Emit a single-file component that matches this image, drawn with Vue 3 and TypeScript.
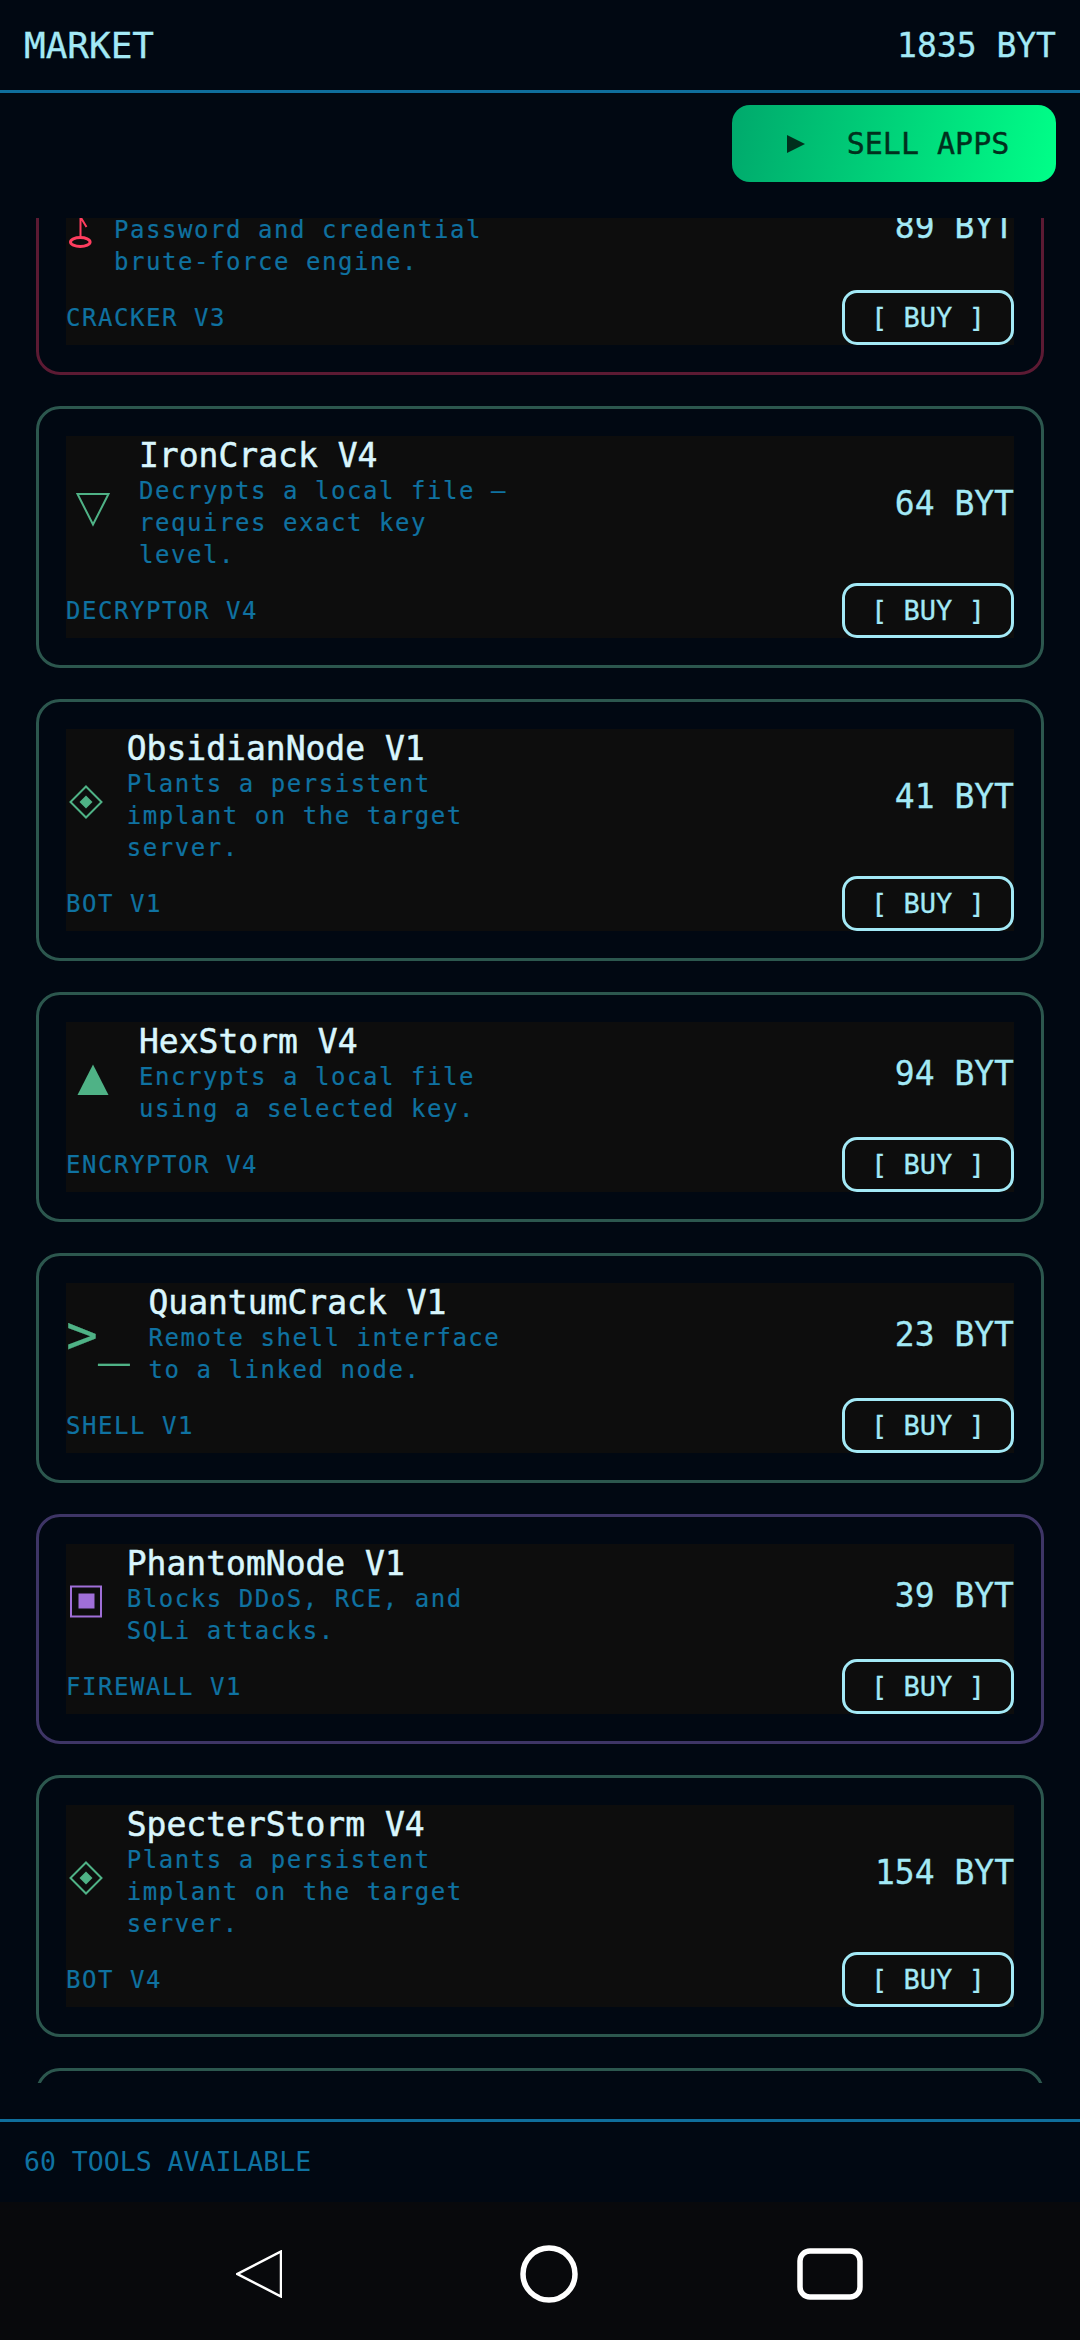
<template>
  <div class="screen">
    <header class="top">
      <span class="top-title">MARKET</span>
      <span class="top-bal">1835 BYT</span>
    </header>

    <div class="sell-row">
      <button class="sell">
        <svg width="18" height="18" viewBox="0 0 18 18"><polygon points="0,0 18,9 0,18" fill="#00301d" /></svg>
        <span>SELL APPS</span>
      </button>
    </div>

    <div class="list">
      <div class="list-inner">
        <article v-for="tool in tools" :key="tool.name" class="card" :class="'tone-' + tool.tone">
          <div class="body">
            <div class="main">
              <span v-if="tool.icon === 'shell'" class="ico ico-shell">&gt;_</span>
              <svg v-else class="ico" :width="iconWidth[tool.icon]" height="60" :viewBox="`0 0 ${iconWidth[tool.icon]} 60`">
                <g v-if="tool.icon === 'key'" fill="none" stroke="#ff3d5e" stroke-width="3">
                  <ellipse cx="14.3" cy="45" rx="9.8" ry="4.5" />
                  <path d="M14.5 40V6M14.5 20l6 10" stroke-width="2" />
                </g>
                <polygon v-else-if="tool.icon === 'down'" points="11.5,20 42.5,20 27,50.5" fill="none" stroke="#4fb286" stroke-width="2" />
                <polygon v-else-if="tool.icon === 'up'" points="27,20.5 42.5,51 11.5,51" fill="#4fb286" />
                <g v-else-if="tool.icon === 'bot'">
                  <polygon points="20,19.5 35.5,35 20,50.5 4.5,35" fill="none" stroke="#4fb286" stroke-width="2" />
                  <polygon points="20,28.5 26.5,35 20,41.5 13.5,35" fill="#4fb286" />
                </g>
                <g v-else>
                  <rect x="5" y="20.5" width="30" height="30" fill="none" stroke="#a06fd8" stroke-width="2" />
                  <rect x="12.5" y="27.5" width="16" height="15" fill="#a06fd8" />
                </g>
              </svg>
              <div class="info">
                <div class="name">{{ tool.name }}</div>
                <p class="desc">
                  <span v-for="line in tool.desc" :key="line">{{ line }}</span>
                </p>
              </div>
              <div class="price">{{ tool.price }} BYT</div>
            </div>
            <div class="foot">
              <span class="kind">{{ tool.kind }}</span>
              <button class="buy">[ BUY ]</button>
            </div>
          </div>
        </article>
      </div>
    </div>

    <footer class="bottom">60 TOOLS AVAILABLE</footer>

    <nav class="nav">
      <svg width="46" height="48" viewBox="0 0 46 48"><polygon points="45,1.5 45,46.5 1.5,24" fill="none" stroke="#fff" stroke-width="2.5" /></svg>
      <svg class="nav-home" width="58" height="58" viewBox="0 0 58 58"><circle cx="29" cy="29" r="26" fill="none" stroke="#fff" stroke-width="5.5" /></svg>
      <svg class="nav-recent" width="66" height="52" viewBox="0 0 66 52"><rect x="3" y="3" width="60" height="46" rx="10" fill="none" stroke="#fff" stroke-width="5.5" /></svg>
    </nav>
  </div>
</template>

<script setup lang="ts">
// 市场页面，列出可购买的工具。

type IconName = 'key' | 'down' | 'up' | 'bot' | 'shell' | 'wall'

interface Tool {
  name: string
  desc: string[]
  kind: string
  price: number
  icon: IconName
  tone: 'red' | 'green' | 'purple'
}

const iconWidth: Record<IconName, number> = { key: 30, down: 55, up: 55, bot: 42.7, shell: 64.4, wall: 42.7 }

const plant = ['Plants a persistent', 'implant on the target', 'server.']

const tools: Tool[] = [
  { name: 'NullCrack V3', desc: ['Password and credential', 'brute-force engine.'], kind: 'CRACKER V3', price: 89, icon: 'key', tone: 'red' },
  { name: 'IronCrack V4', desc: ['Decrypts a local file —', 'requires exact key', 'level.'], kind: 'DECRYPTOR V4', price: 64, icon: 'down', tone: 'green' },
  { name: 'ObsidianNode V1', desc: plant, kind: 'BOT V1', price: 41, icon: 'bot', tone: 'green' },
  { name: 'HexStorm V4', desc: ['Encrypts a local file', 'using a selected key.'], kind: 'ENCRYPTOR V4', price: 94, icon: 'up', tone: 'green' },
  { name: 'QuantumCrack V1', desc: ['Remote shell interface', 'to a linked node.'], kind: 'SHELL V1', price: 23, icon: 'shell', tone: 'green' },
  { name: 'PhantomNode V1', desc: ['Blocks DDoS, RCE, and', 'SQLi attacks.'], kind: 'FIREWALL V1', price: 39, icon: 'wall', tone: 'purple' },
  { name: 'SpecterStorm V4', desc: plant, kind: 'BOT V4', price: 154, icon: 'bot', tone: 'green' },
  { name: 'IronStorm V2', desc: ['Encrypts a local file', 'using a selected key.'], kind: 'ENCRYPTOR V2', price: 72, icon: 'up', tone: 'green' },
]
</script>

<style>
html, body { background: #010812; }
</style>

<style scoped>
.screen { width: 1080px; height: 2340px; display: flex; flex-direction: column; background: #010812; font-family: "DejaVu Sans Mono", monospace; overflow: hidden; }

.top { height: 90px; box-sizing: content-box; border-bottom: 3px solid #0f6e9c; display: flex; align-items: center; justify-content: space-between; padding: 0 24px; color: #a3e9f6; -webkit-text-stroke: 0.3px #a3e9f6; }
.top-title { font-size: 36px; }
.top-bal { font-size: 33px; }

.sell-row { display: flex; justify-content: flex-end; padding: 12px 24px 36px; }
.sell { width: 324px; height: 77px; border: 0; border-radius: 18px; background: linear-gradient(100deg, #00a96c, #00ff88); display: flex; align-items: center; justify-content: center; gap: 42px; font: inherit; font-size: 30px; color: #00301d; -webkit-text-stroke: 0.4px #00301d; padding: 0 0 0 8px; }

.list { height: 1865px; overflow: hidden; flex: none; }
.list-inner { margin-top: -73px; padding: 0 36px; display: flex; flex-direction: column; gap: 31px; }

.card { border: 3px solid #2c574e; border-radius: 24px; padding: 27px; }
.tone-red { border-color: #5c1a33; }
.tone-purple { border-color: #3e3566; }

.body { background: #0d0d0d; }
.main { display: flex; align-items: center; gap: 18px; margin-bottom: 12px; }
.ico { flex: none; }
.ico-shell { font-size: 53px; color: #4fb286; -webkit-text-stroke: 0.2px #4fb286; width: 64.4px; line-height: 60px; white-space: nowrap; }
.info { flex: 1; min-width: 0; }
.name { font-size: 33px; line-height: 39px; color: #d9f6fd; -webkit-text-stroke: 0.5px #d9f6fd; }
.desc { margin: 0; font-size: 24px; line-height: 32px; letter-spacing: 1.55px; color: #0f72a1; -webkit-text-stroke: 0.2px #0f72a1; }
.desc span { display: block; }
.price { font-size: 33px; color: #a3e9f6; -webkit-text-stroke: 0.3px #a3e9f6; white-space: nowrap; }

.foot { display: flex; align-items: center; justify-content: space-between; }
.kind { font-size: 24px; letter-spacing: 1.55px; color: #0f72a1; -webkit-text-stroke: 0.2px #0f72a1; }
.buy { width: 172px; height: 55px; box-sizing: border-box; border: 3px solid #a3e9f6; border-radius: 15px; background: transparent; color: #a3e9f6; -webkit-text-stroke: 0.3px #a3e9f6; font: inherit; font-size: 27px; padding: 0; }

.bottom { margin-top: 36px; height: 80px; box-sizing: border-box; height: 83px; border-top: 3px solid #0f6e9c; display: flex; align-items: center; padding: 0 24px 2px; font-size: 26.5px; color: #0f72a1; }

.nav { flex: 1; background: #08090c; display: flex; align-items: center; padding: 6px 0 0 236px; }
.nav-home { margin-left: 238px; }
.nav-recent { margin-left: 219px; }
</style>
